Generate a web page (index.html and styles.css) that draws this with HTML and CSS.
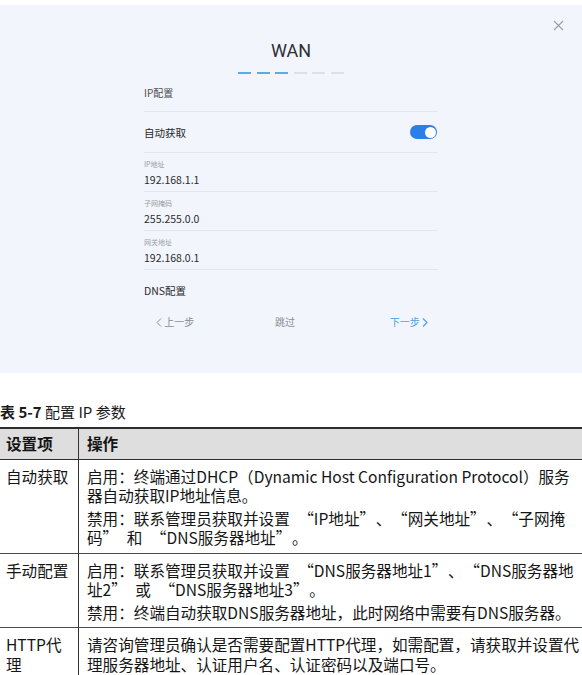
FILE: index.html
```html
<!DOCTYPE html>
<html lang="zh-CN">
<head>
    <meta charset="UTF-8">
    <meta name="viewport" content="width=device-width, initial-scale=1.0">
    <title>配置 IP 参数</title>
    <link rel="stylesheet" href="styles.css">
</head>
<body>
    <div class="screen">
        <button class="close" aria-label="关闭">
            <svg width="11" height="11" viewBox="0 0 11 11">
                <path d="M1 1 L10 10 M10 1 L1 10" stroke="#9a9da3" stroke-width="1.1" fill="none"/>
            </svg>
        </button>
        <div class="wizard">
            <h1 class="wizard-title">WAN</h1>
            <div class="steps">
                <span class="step done"></span>
                <span class="step done"></span>
                <span class="step done"></span>
                <span class="step"></span>
                <span class="step"></span>
                <span class="step"></span>
            </div>

            <div class="section">IP配置</div>
            <div class="switch-row">
                <span>自动获取</span>
                <span class="switch on"></span>
            </div>
            <div class="field">
                <div class="field-label">IP地址</div>
                <div class="field-value">192.168.1.1</div>
            </div>
            <div class="field">
                <div class="field-label">子网掩码</div>
                <div class="field-value">255.255.0.0</div>
            </div>
            <div class="field">
                <div class="field-label">网关地址</div>
                <div class="field-value">192.168.0.1</div>
            </div>
            <div class="section section-dns">DNS配置</div>

            <div class="nav">
                <span class="nav-prev">
                    <svg width="6" height="9" viewBox="0 0 6 9"><path d="M5 0.5 L1 4.5 L5 8.5" stroke="#8a8d92" stroke-width="1" fill="none"/></svg>
                    上一步
                </span>
                <span class="nav-skip">跳过</span>
                <span class="nav-next">
                    下一步
                    <svg width="6" height="9" viewBox="0 0 6 9"><path d="M1 0.5 L5 4.5 L1 8.5" stroke="#4aa3e6" stroke-width="1.2" fill="none"/></svg>
                </span>
            </div>
        </div>
    </div>

    <p class="caption"><b>表 5-7</b> 配置 IP 参数</p>
    <table class="param-table">
        <thead>
            <tr>
                <th class="col-name">设置项</th>
                <th>操作</th>
            </tr>
        </thead>
        <tbody>
            <tr>
                <td class="col-name">自动获取</td>
                <td>
                    <p>启用：终端通过DHCP（Dynamic Host Configuration Protocol）服务器自动获取IP地址信息。</p>
                    <p>禁用：联系管理员获取并设置<q>IP地址</q>、<q>网关地址</q>、<q>子网掩码</q>和<q>DNS服务器地址</q>。</p>
                </td>
            </tr>
            <tr>
                <td class="col-name">手动配置</td>
                <td>
                    <p>启用：联系管理员获取并设置<q>DNS服务器地址1</q>、<q>DNS服务器地址2</q>或<q>DNS服务器地址3</q>。</p>
                    <p>禁用：终端自动获取DNS服务器地址，此时网络中需要有DNS服务器。</p>
                </td>
            </tr>
            <tr>
                <td class="col-name">HTTP代理</td>
                <td>
                    <p>请咨询管理员确认是否需要配置HTTP代理，如需配置，请获取并设置代理服务器地址、认证用户名、认证密码以及端口号。</p>
                </td>
            </tr>
        </tbody>
    </table>
</body>
</html>
```

FILE: styles.css
```css
body {
    margin: 0;
    width: 582px;
    overflow: hidden;
    background: #fff;
    font-family: "Noto Sans CJK SC", sans-serif;
}

/* Device screen with the WAN wizard */
.screen {
    position: relative;
    margin-top: 5px;
    height: 368px;
    background: #f2f5fb;
}

.close {
    position: absolute;
    top: 15px;
    right: 18px;
    padding: 0;
    border: none;
    background: none;
    line-height: 0;
}

.wizard {
    width: 294px;
    margin: 0 auto;
    padding-top: 34px;
}

.wizard-title {
    margin: 0;
    font: 400 18px/24px Roboto, "Noto Sans CJK SC", sans-serif;
    color: #2e3033;
    text-align: center;
}

.steps {
    display: flex;
    justify-content: center;
    gap: 5.6px;
    margin-top: 9px;
}

.step {
    width: 13px;
    height: 2px;
    background: #dde1e6;
}

.step.done {
    background: #58ade6;
}

.section {
    height: 37px;
    line-height: 37px;
    font-size: 10px;
    color: #4d5055;
    border-bottom: 1px solid #e4e8ee;
}

.switch-row {
    display: flex;
    align-items: center;
    justify-content: space-between;
    height: 40px;
    font-size: 10.5px;
    color: #26282b;
    border-bottom: 1px solid #e4e8ee;
}

.switch {
    position: relative;
    width: 27px;
    height: 14px;
    margin-right: 1px;
    border-radius: 7px;
    background: #cfd4da;
}

.switch.on {
    background: #2a7fe9;
}

.switch::after {
    content: "";
    position: absolute;
    top: 1.5px;
    left: 1.5px;
    width: 11px;
    height: 11px;
    border-radius: 50%;
    background: #fff;
}

.switch.on::after {
    left: auto;
    right: 1.5px;
}

.field {
    padding: 6px 0 3px;
    border-bottom: 1px solid #e4e8ee;
}

.field-label {
    font-size: 7px;
    line-height: 10px;
    color: #9a9da2;
}

.field-value {
    margin-top: 3px;
    font-size: 10.5px;
    line-height: 16px;
    color: #2a2c2f;
}

.section-dns {
    height: 42px;
    line-height: 42px;
    font-size: 10.5px;
    color: #2a2c2f;
    border-bottom: none;
}

.nav {
    display: flex;
    justify-content: space-between;
    align-items: center;
    height: 18px;
    padding: 0 10px 0 12px;
    font-size: 10px;
}

.nav-prev,
.nav-skip {
    color: #8a8d92;
}

.nav-skip {
    margin-right: 14px;
}

.nav-next {
    color: #4aa3e6;
}

.nav svg {
    vertical-align: -1px;
}

/* Parameter table */
.caption {
    margin: 29px 0 5px;
    font-size: 15px;
    line-height: 20px;
    color: #1a1a1a;
}

.param-table {
    width: 588.5px;
    border-collapse: collapse;
    font-size: 15.6px;
    line-height: 19.5px;
    color: #151515;
}

.param-table th {
    padding: 5px 8px;
    text-align: left;
    font-weight: 700;
    background: #dedede;
    border-top: 2px solid #2e2e2e;
    border-bottom: 1.5px solid #2e2e2e;
}

.param-table td {
    padding: 7px 6px 5px 8px;
    vertical-align: top;
    border-bottom: 1.5px solid #4a4a4a;
}

.param-table .col-name {
    width: 64px;
    padding-left: 6px;
    border-right: 1px solid #333;
}

.param-table p {
    margin: 0;
}

.param-table p + p {
    margin-top: 3px;
}

/* Chinese quotation marks get some air on their outer side */
.param-table q::before {
    padding-left: 8.5px;
}

.param-table q::after {
    padding-right: 8.5px;
}
```
